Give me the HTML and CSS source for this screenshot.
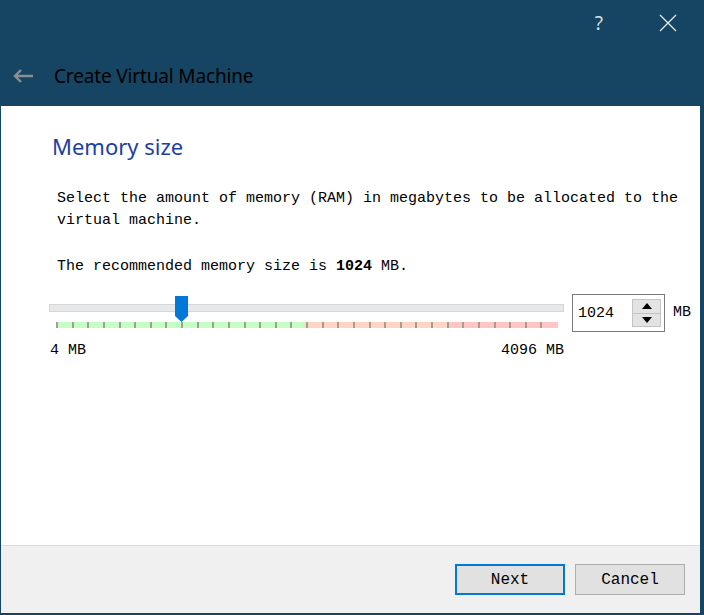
FILE: index.html
```html
<!DOCTYPE html>
<html>
<head>
<meta charset="utf-8">
<link rel="stylesheet" href="styles.css">
</head>
<body>
<div class="window">
  <div class="header">
    <div class="topbar">
      <span class="help">?</span>
      <svg class="close" width="18" height="18" viewBox="0 0 18 18"><path d="M1 1L17 17M17 1L1 17" stroke="#e8eef2" stroke-width="1.2" fill="none"/></svg>
    </div>
    <div class="titlerow">
      <svg class="back" width="22" height="16" viewBox="0 0 22 16"><path d="M21 8H3M9 2L3 8L9 14" stroke="#8a8f93" stroke-width="2.4" fill="none"/></svg>
      <span class="title">Create Virtual Machine</span>
    </div>
  </div>
  <div class="content">
    <h1 class="heading">Memory size</h1>
    <p class="text">Select the amount of memory (RAM) in megabytes to be allocated to the virtual machine.</p>
    <p class="text rec">The recommended memory size is <b>1024</b> MB.</p>
    <div class="sliderrow">
      <div class="slider">
        <div class="groove"></div>
        <svg class="handle" width="13" height="26" viewBox="0 0 13 26"><path d="M0 0H13V20L6.5 26L0 20Z" fill="#0078d7"/></svg>
        <div class="ticks">
          <span></span><span></span><span></span><span></span><span></span><span></span><span></span><span></span><span></span><span></span><span></span>
          <span></span><span></span><span></span><span></span><span></span><span></span><span></span><span></span><span></span><span></span><span></span>
          <span></span><span></span><span></span><span></span><span></span><span></span><span></span><span></span><span></span><span></span><span></span>
        </div>
        <div class="labels"><span>4 MB</span><span>4096 MB</span></div>
      </div>
      <div class="spinbox">
        <span class="spinval">1024</span>
        <div class="spinbtns">
          <div class="spinbtn"><svg width="10" height="6" viewBox="0 0 10 6"><path d="M0 6L5 0L10 6Z" fill="#000"/></svg></div>
          <div class="spinbtn"><svg width="10" height="6" viewBox="0 0 10 6"><path d="M0 0L5 6L10 0Z" fill="#000"/></svg></div>
        </div>
      </div>
      <span class="unit">MB</span>
    </div>
  </div>
  <div class="footer">
    <button class="btn primary">Next</button>
    <button class="btn">Cancel</button>
  </div>
</div>
</body>
</html>
```
FILE: styles.css
```css
html, body {
  margin: 0;
  padding: 0;
  width: 704px;
  height: 615px;
  overflow: hidden;
  background: #154562;
}
.window {
  box-sizing: border-box;
  width: 704px;
  height: 615px;
  border-left: 1px solid #154562;
  border-right: 4px solid #154562;
  border-bottom: 2px solid #154562;
  display: flex;
  flex-direction: column;
}
.header {
  height: 106px;
  background: #154562;
  flex: none;
}
.topbar {
  height: 46px;
  display: flex;
  align-items: center;
  justify-content: flex-end;
}
.help {
  font-family: "Noto Sans", sans-serif;
  font-size: 19px;
  color: #d8e0e6;
  margin-right: 56px;
  margin-top: -1px;
}
.close {
  margin-right: 23px;
}
.titlerow {
  height: 60px;
  display: flex;
  align-items: center;
  box-sizing: border-box;
}
.back {
  margin-left: 11px;
  margin-right: 20px;
}
.title {
  font-family: "Noto Sans", sans-serif;
  font-size: 19px;
  color: #000;
  letter-spacing: -0.15px;
}
.content {
  flex: 1;
  background: #fff;
}
.heading {
  margin: 26px 0 0 51px;
  font-family: "Noto Sans", sans-serif;
  font-weight: normal;
  font-size: 22px;
  line-height: 28px;
  color: #1d3ea3;
}
.text {
  margin: 28px 0 0 56px;
  width: 624px;
  font-family: "Liberation Mono", monospace;
  font-size: 15px;
  line-height: 22px;
  color: #000;
}
.text.rec {
  margin-top: 24px;
}
.text b {
  font-weight: bold;
}
.sliderrow {
  display: flex;
  align-items: flex-start;
  margin-top: 18px;
  margin-left: 48px;
}
.slider {
  position: relative;
  width: 515px;
}
.groove {
  margin-top: 8px;
  height: 8px;
  box-sizing: border-box;
  background: #e7e8e9;
  border: 1px solid #d6d6d6;
}
.handle {
  position: absolute;
  left: 126px;
  top: 0;
}
.ticks {
  margin-top: 10px;
  margin-left: 7px;
  width: 502px;
  height: 6px;
  display: flex;
  justify-content: space-between;
  background: linear-gradient(to right, #c6ffc6 0, #c6ffc6 247px, #e8e8b8 247px, #e8e8b8 249px, #ffd6c2 249px, #ffd6c2 393px, #ffc6c6 393px, #ffc6c6 502px);
}
.ticks span {
  width: 2px;
  height: 6px;
  background: #a39e8e;
}
.ticks span:last-child {
  visibility: hidden;
}
.labels {
  display: flex;
  justify-content: space-between;
  margin-top: 14px;
  font-family: "Liberation Mono", monospace;
  font-size: 15px;
  line-height: 18px;
  color: #000;
  padding-left: 1px;
}
.spinbox {
  margin-left: 8px;
  margin-top: -2px;
  box-sizing: border-box;
  width: 93px;
  height: 38px;
  border: 1px solid #7a7a7a;
  display: flex;
  align-items: center;
  justify-content: space-between;
  background: #fff;
}
.spinval {
  margin-left: 5px;
  font-family: "Liberation Mono", monospace;
  font-size: 15px;
  color: #000;
}
.spinbtns {
  margin-right: 3px;
  display: flex;
  flex-direction: column;
  width: 29px;
  height: 28px;
  box-sizing: border-box;
  border: 1px solid #c4c4c4;
  background: #e3e3e3;
}
.spinbtn {
  flex: 1;
  display: flex;
  align-items: center;
  justify-content: center;
}
.spinbtn + .spinbtn {
  border-top: 1px solid #c4c4c4;
}
.unit {
  margin-left: 8px;
  margin-top: 8px;
  font-family: "Liberation Mono", monospace;
  font-size: 15px;
  color: #000;
}
.footer {
  flex: none;
  height: 68px;
  box-sizing: border-box;
  border-top: 1px solid #dcdcdc;
  background: #f0f0f0;
  display: flex;
  justify-content: flex-end;
  align-items: flex-start;
  padding-top: 18px;
  padding-right: 15px;
  gap: 10px;
}
.btn {
  box-sizing: border-box;
  width: 110px;
  height: 31px;
  margin: 0;
  background: #e1e1e1;
  border: 1px solid #adadad;
  font-family: "Liberation Mono", monospace;
  font-size: 16px;
  color: #000;
  padding: 0;
}
.btn.primary {
  border: 2px solid #0078d7;
}
```
